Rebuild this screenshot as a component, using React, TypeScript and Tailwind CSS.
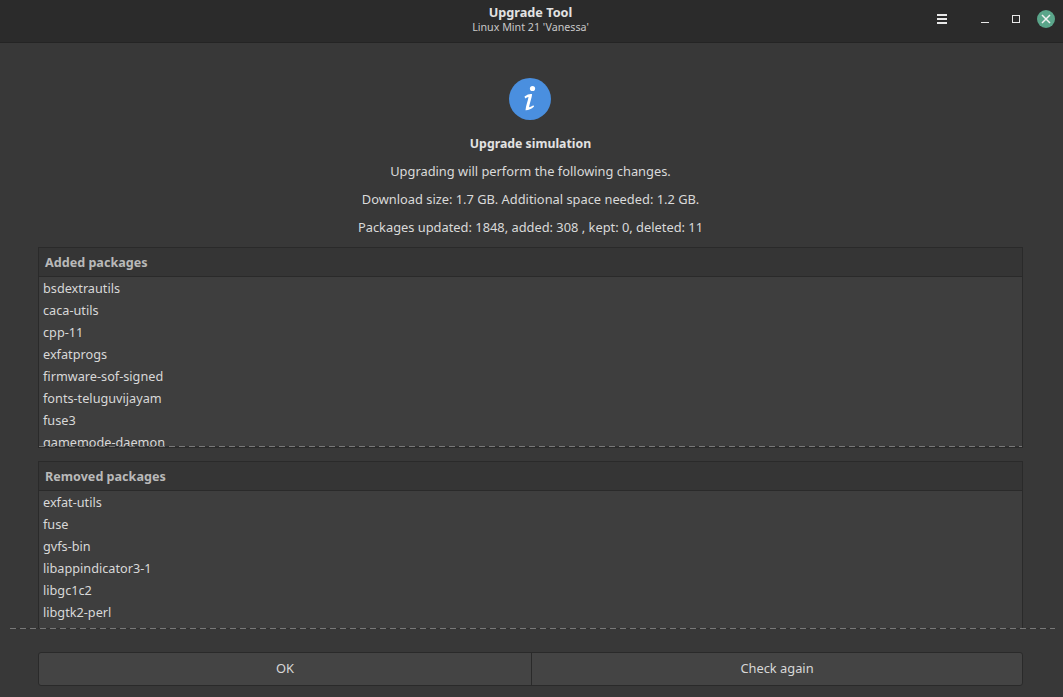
import React from "react";

const dash = "h-px bg-[repeating-linear-gradient(90deg,#787878_0,#787878_6px,#303030_6px,#303030_10px)]";

const added = [
  "bsdextrautils",
  "caca-utils",
  "cpp-11",
  "exfatprogs",
  "firmware-sof-signed",
  "fonts-teluguvijayam",
  "fuse3",
  "gamemode-daemon",
];

const removed = ["exfat-utils", "fuse", "gvfs-bin", "libappindicator3-1", "libgc1c2", "libgtk2-perl"];

const PackageList = ({ title, items, height }: { title: string; items: string[]; height: string }) => (
  <div className={`relative shrink-0 border border-[#2a2a2a] flex flex-col ${height}`}>
    <div className="h-[29px] shrink-0 bg-[#353535] border-b border-[#2a2a2a] pl-[6px] pt-[3px] flex items-center font-bold text-[12.6px] text-[#b9b9b9]">
      {title}
    </div>
    <div className="flex-1 overflow-hidden bg-[#3e3e3e] pl-1">
      {items.map((name) => (
        <div key={name} className="h-[22px] leading-[22px] text-[12.7px] text-[#d8d8d8]">
          {name}
        </div>
      ))}
    </div>
  </div>
);

export default function App() {
  return (
    <div className="w-[1063px] h-[697px] flex flex-col overflow-hidden bg-[#383838] font-['Noto_Sans',sans-serif] text-[12.85px] text-[#dadada]">
      <header className="relative h-[43px] shrink-0 bg-[#2b2b2b] border-b border-[#242424] pr-[2px] pb-[4px] flex flex-col items-center justify-center">
        <div className="font-bold text-[12.7px] leading-[15px] text-[#e2e2e2]">Upgrade Tool</div>
        <div className="text-[10.7px] leading-[14px] text-[#c8c8c8]">Linux Mint 21 'Vanessa'</div>
        <div className="absolute inset-y-0 right-[8px] flex items-center">
          <svg width="12" height="12" viewBox="0 0 12 12" className="mr-[32px] mb-[5px]" fill="#e8e8e8">
            <rect x="1" y="1" width="10" height="2" />
            <rect x="1" y="5" width="10" height="2" />
            <rect x="1" y="9" width="10" height="2" />
          </svg>
          <svg width="10" height="10" viewBox="0 0 10 10" className="mr-[21px] mb-[4px]" stroke="#e8e8e8" fill="none">
            <path d="M1 8.5h8" />
          </svg>
          <svg width="10" height="10" viewBox="0 0 10 10" className="mr-[16px] mb-[5px]" stroke="#e8e8e8" fill="none">
            <rect x="1.500" y="1.500" width="7" height="7" />
          </svg>
          <div className="w-[18px] h-[18px] mb-[4px] rounded-full bg-[#5aa58a] flex items-center justify-center">
            <svg width="10" height="10" viewBox="0 0 10 10" stroke="#f2f2f2" strokeWidth="1.5">
              <path d="M1 1l8 8M9 1l-8 8" />
            </svg>
          </div>
        </div>
      </header>

      <main className="relative h-[586px] shrink-0 overflow-hidden pr-[2px] flex flex-col items-center">
        <div className="w-[42px] h-[42px] mt-[35px] mr-[2px] rounded-full bg-[#4a8fdf] flex items-center justify-center">
          <svg width="42" height="42" viewBox="0 0 42 42" fill="#ffffff">
            <circle cx="23.5" cy="10.5" r="2.6" />
            <path d="M15.5 18.5c3-2.2 6-2.9 7.6-2.3-.4 4-2.6 9.8-3 13 1.2-.1 2.8-.9 4.2-2l.8 1.2c-2.8 2.6-6 4-8.6 3.8.3-4.200 2.500-9.700 3-13.200-1 .2-2.200.700-3.300 1.500z" />
          </svg>
        </div>
        <div className="mt-[16px] h-[16px] leading-[16px] font-bold text-[12.3px] text-[#e2e2e2]">Upgrade simulation</div>
        <div className="mt-[11px] h-[16px] leading-[16px]">Upgrading will perform the following changes.</div>
        <div className="mt-[12px] h-[16px] leading-[16px]">Download size: 1.7 GB. Additional space needed: 1.2 GB.</div>
        <div className="mt-[12px] h-[16px] leading-[16px]">Packages updated: 1848, added: 308 , kept: 0, deleted: 11</div>

        <div className="mt-[12px] w-[985px] flex flex-col gap-[13px]">
          <div className="relative">
            <PackageList title="Added packages" items={added} height="h-[201px]" />
            <div className={`absolute left-px right-px bottom-[1px] ${dash}`} />
          </div>
          <PackageList title="Removed packages" items={removed} height="h-[200px]" />
        </div>

        <div className={`absolute left-[10px] right-[8px] bottom-0 ${dash}`} />
      </main>

      <footer className="flex-1 pl-[38px] pr-[40px] pt-[23px]">
        <div className="h-[34px] flex border border-[#2a2a2a] rounded-[3px] bg-[#444444] text-[#d8d8d8]">
          <div className="w-[493px] flex items-center justify-center border-r border-[#2a2a2a]">OK</div>
          <div className="flex-1 flex items-center justify-center">Check again</div>
        </div>
      </footer>
    </div>
  );
}
